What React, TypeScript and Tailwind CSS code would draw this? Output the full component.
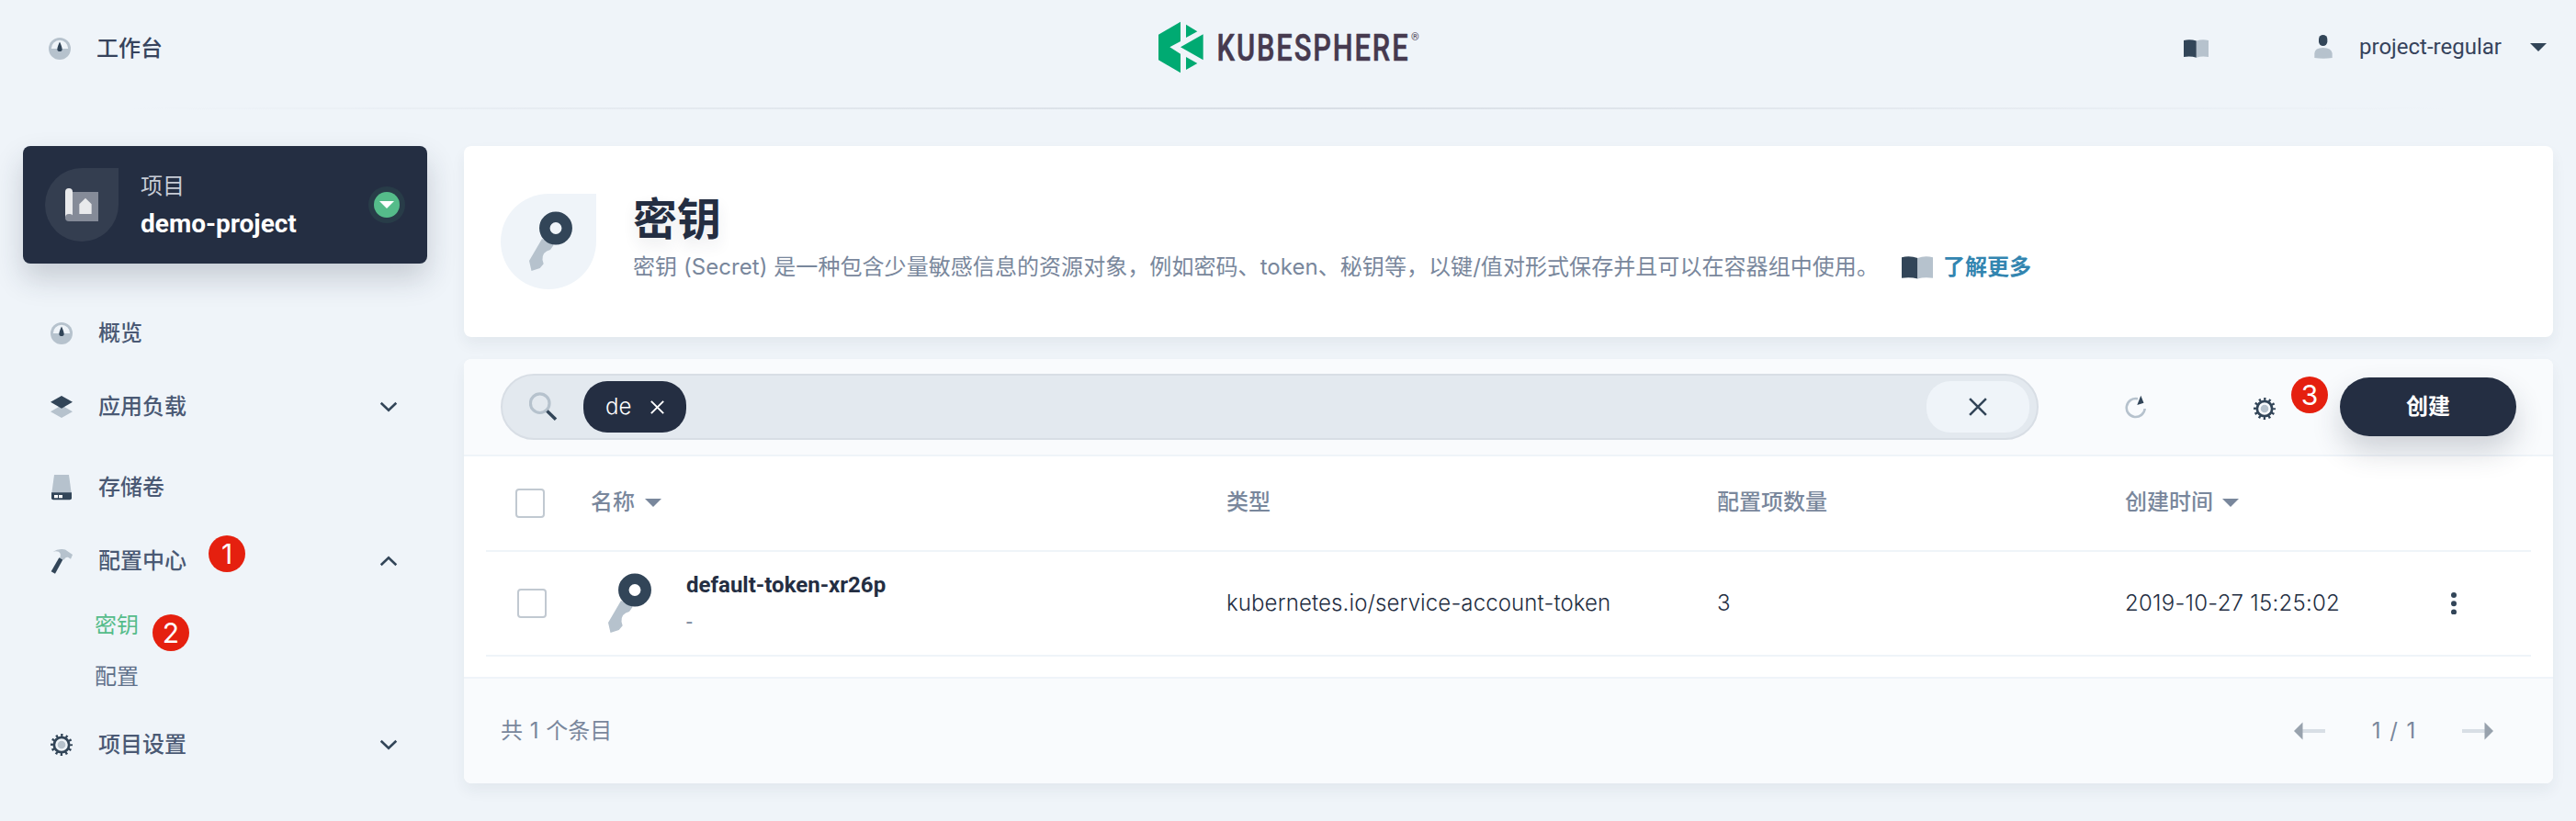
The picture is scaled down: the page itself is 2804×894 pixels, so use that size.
import React from "react";

const cjk = "font-[Inter,'Noto_Sans_CJK_SC',sans-serif]";
const roboto = "font-[Roboto,'Noto_Sans_CJK_SC',sans-serif]";

function Gauge() {
  return (
    <svg className="h-6 w-6 shrink-0" viewBox="0 0 24 24">
      <circle cx="12" cy="12" r="12" fill="#b6c2cd" />
      <path d="M2.8 12a9.2 9.2 0 0 1 18.4 0z" fill="#eff4f9" />
      <path d="M12 4.5c.9 2 2.7 6 2.7 8.2 0 1.500-1.200 2.300-2.700 2.300s-2.700-.8-2.700-2.300C9.300 10.500 11.100 6.500 12 4.500z" fill="#324558" />
    </svg>
  );
}

function Layers() {
  return (
    <svg className="h-6 w-6 shrink-0" viewBox="165 322 72 70" preserveAspectRatio="none">
      <path d="M201 352l36 20.500-36 19.500-36-19.500z" fill="#b6c2cd" />
      <path d="M201 322l36 20-36 20-36-20z" fill="#324558" />
    </svg>
  );
}

function Disk() {
  return (
    <svg className="h-7 w-6 shrink-0" viewBox="165 572 72 81" preserveAspectRatio="none">
      <path d="M177 572h48l8 57h-64z" fill="#b6c2cd" />
      <path d="M168 628h66v17q0 6-6 6h-54q-6 0-6-6z" fill="#324558" />
      <path d="M177 636h12v9h-12zM192 636h12v9h-12z" fill="#fff" />
    </svg>
  );
}

function Hammer() {
  return (
    <svg className="h-7 w-6 shrink-0" viewBox="165 804 72 81" preserveAspectRatio="none">
      <path d="M173 815q14-9 30-8l10 1 24 16-6 14-9-6q-9-1-13 9l-14-6q7-14-4-20-8-3-18 0z" fill="#b6c2cd" />
      <path d="M193 834l12 6-25 44-13-7z" fill="#324558" />
    </svg>
  );
}

function Gear() {
  return (
    <svg className="h-6 w-6 shrink-0" viewBox="0 0 24 24" fill="none">
      <circle cx="12" cy="12" r="10.500" stroke="#324558" strokeWidth="3" strokeDasharray="2.300 3.198" strokeDashoffset="1.150" />
      <circle cx="12" cy="12" r="8.200" stroke="#324558" strokeWidth="2.800" />
      <circle cx="12" cy="12" r="4.300" fill="#b6c2cd" />
    </svg>
  );
}

function Chevron({ up = false }: { up?: boolean }) {
  return (
    <svg className={up ? "h-3 w-5 rotate-180" : "h-3 w-5"} viewBox="0 0 20 12" fill="none">
      <path d="M1.700 1.700l8.300 8 8.300-8" stroke="#324558" strokeWidth="2.600" />
    </svg>
  );
}

function Book({ className }: { className: string }) {
  return (
    <svg className={className} viewBox="111 129 82 62" preserveAspectRatio="none">
      <path d="M111 132q22-5 42 2v56q-20-6-42-2z" fill="#324558" />
      <path d="M193 132q-22-5-40 2v56q18-6 40-2z" fill="#b6c2cd" />
    </svg>
  );
}

function Key() {
  return (
    <svg className="h-[66px] w-12 shrink-0" viewBox="0 0 48 66">
      <path d="M14 30L0 54l2.500 11 9.200-3 4-4.700L14.500 53Q14 44 23 42l3.700-5.300z" fill="#b6c2cd" />
      <circle cx="29" cy="18.500" r="12.200" stroke="#324558" strokeWidth="11.500" fill="none" />
    </svg>
  );
}

function Cross({ className, color, w }: { className: string; color: string; w: number }) {
  return (
    <svg className={className} viewBox="0 0 18 18">
      <path d="M1 1l16 16M17 1L1 17" stroke={color} strokeWidth={w} />
    </svg>
  );
}

function Caret({ color }: { color: string }) {
  return (
    <svg className="h-[9px] w-[18px]" viewBox="0 0 18 9">
      <path d="M0 0h18l-9 9z" fill={color} />
    </svg>
  );
}

function Badge({ n, className }: { n: string; className: string }) {
  return (
    <span className={`absolute flex h-10 w-10 items-center justify-center rounded-full bg-[#e5200f] font-[Inter,sans-serif] text-[30px] leading-none text-white ${className}`}>
      {n}
    </span>
  );
}

function NavItem({ icon, label, arrow, badge, className = "" }: { icon: React.ReactNode; label: string; arrow?: "up" | "down"; badge?: React.ReactNode; className?: string }) {
  return (
    <div className={`relative flex h-12 items-center pr-8 pl-[30px] ${className}`}>
      {icon}
      <span className="ml-7 grow text-[24px] leading-none font-medium text-[#4a5974]">{label}</span>
      {arrow && <Chevron up={arrow === "up"} />}
      {badge}
    </div>
  );
}

function Logo() {
  return (
    <svg className="h-[60px] w-[290px] shrink-0" viewBox="0 0 290 60">
      <g transform="translate(-31 -21) scale(.33333)" fill="#00aa72">
        <path d="M93 113l72-42v64l-35 19 35 22v62l-72-42zM183 80l37 23-37 20zM183 186l37 21-37 21zM239 112v84l-74-42z" />
      </g>
      <text transform="translate(63.500 44.700) scale(.742 1)" fontFamily="Roboto" fontWeight="500" fontSize="41.500" letterSpacing="2.600" fill="#463a4f" stroke="#463a4f" strokeWidth=".6" strokeLinejoin="round">KUBESPHERE</text>
      <text x="275" y="23" fontFamily="Roboto" fontSize="11" fill="#463a4f">®</text>
    </svg>
  );
}

export default function App() {
  return (
    <div className={`flex h-[894px] w-[2804px] flex-col overflow-hidden bg-[#eff4f9] ${cjk}`}>
      <header className="flex h-[117px] items-start">
        <div className="flex h-[106px] w-[1261px] items-center pl-[53px]">
          <Gauge />
          <span className="ml-[28px] text-[24px] leading-none font-medium text-[#36435c]">工作台</span>
        </div>
        <div className="pt-[21px]">
          <Logo />
        </div>
        <div className={`ml-[826px] flex h-[102px] items-center ${roboto}`}>
          <Book className="mt-1 h-5 w-[27px]" />
          <svg className="ml-[115px] h-[26px] w-5" viewBox="538 114 60 78">
            <rect x="553" y="114" width="28" height="36" rx="14" fill="#324558" />
            <path d="M539 189v-15q1-18 28-18t30 18v15q-29 4-58 0z" fill="#b6c2cd" />
          </svg>
          <span className="ml-[29px] w-[186px] text-[24px] leading-none text-[#36435c]">project-regular</span>
          <Caret color="#324558" />
        </div>
      </header>
      <div className="h-0.5 shrink-0 bg-linear-to-r from-transparent from-[5%] via-[#d8dee5] to-transparent to-[95%]" />

      <div className="flex gap-10 pt-10 pl-[25px]">
        <aside className="w-[440px]">
          <div className="flex h-32 items-center rounded-lg bg-[#242e42] pr-6 pl-6 shadow-[0_16px_32px_rgba(36,46,66,0.2)]">
            <div className="flex h-20 w-20 items-center justify-center rounded-full rounded-tr-none bg-[#343e50]">
              <svg className="h-9 w-9" viewBox="213 615 108 108">
                <path d="M225 627h96v96h-96z" fill="#858b98" />
                <path d="M213 627q0-12 12-12t12 12v82h-24z" fill="#e9eaec" />
                <rect x="213" y="699" width="26" height="24" rx="12" fill="#858b98" />
                <path d="M279 647l20 20v32h-40v-32z" fill="#e9eaec" />
              </svg>
            </div>
            <div className="ml-6 grow pt-[3px]">
              <div className="text-[24px] leading-[36px] text-[#c7ccd6]">项目</div>
              <div className={`mt-[3px] text-[28px] leading-[40px] font-bold text-white ${roboto}`}>demo-project</div>
            </div>
            <div className="flex h-10 w-10 items-center justify-center rounded-full bg-[#283c48]">
              <div className="flex h-7 w-7 items-center justify-center rounded-full bg-[#55bc8a]">
                <svg className="h-2 w-4" viewBox="0 0 16 8">
                  <path d="M0 0h16l-8 8z" fill="#fff" />
                </svg>
              </div>
            </div>
          </div>

          <nav>
            <NavItem icon={<Gauge />} label="概览" className="mt-[52px]" />
            <NavItem icon={<Layers />} label="应用负载" arrow="down" className="mt-8" />
            <NavItem icon={<Disk />} label="存储卷" className="mt-10" />
            <NavItem icon={<Hammer />} label="配置中心" arrow="up" className="mt-8" badge={<Badge n="1" className="top-[-4px] left-[202px]" />} />
            <div className="relative mt-[26px] flex h-10 items-center pl-[78px] text-[24px] leading-none text-[#55bc8a]">
              密钥
              <Badge n="2" className="top-[8px] left-[141px]" />
            </div>
            <div className="mt-4 flex h-10 items-center pl-[78px] text-[24px] leading-none text-[#5f708a]">配置</div>
            <NavItem icon={<Gear />} label="项目设置" arrow="down" className="mt-[30px]" />
          </nav>
        </aside>

        <main className="w-[2274px]">
          <section className="flex h-52 items-center rounded-lg bg-white pl-10 shadow-[0_8px_16px_rgba(36,46,66,0.06)]">
            <div className="flex h-[104px] w-[104px] items-center rounded-full rounded-tr-none bg-[#eff4f9] pl-[31px]">
              <Key />
            </div>
            <div className="ml-10">
              <h1 className="mb-2 text-[48px] leading-[48px] font-bold text-[#242e42] [text-shadow:0_8px_16px_rgba(36,46,66,0.1)]">密钥</h1>
              <div className="flex items-center">
                <p className="w-[1356px] text-[24px] leading-[40px] tracking-[0.06px] whitespace-nowrap text-[#79879c]">
                  密钥 (Secret) 是一种包含少量敏感信息的资源对象，例如密码、token、秘钥等，以键/值对形式保存并且可以在容器组中使用。
                </p>
                <Book className="ml-[25px] h-[25px] w-[34px]" />
                <a className="ml-[11px] text-[24px] leading-[40px] font-bold text-[#3385b0]">了解更多</a>
              </div>
            </div>
          </section>

          <section className="mt-6 flex h-[462px] flex-col rounded-lg bg-white shadow-[0_8px_16px_rgba(36,46,66,0.06)]">
            <div className="flex h-[106px] shrink-0 items-center rounded-t-lg border-b-2 border-[#eff4f9] bg-[#f9fbfd] pl-10">
              <div className="flex h-[72px] w-[1674px] items-center rounded-full border-2 border-[#d8dee5] bg-[#e3e9ef] pr-2 pl-[29px]">
                <svg className="h-8 w-8" viewBox="0 0 32 32" fill="none">
                  <circle cx="11.700" cy="12.200" r="10.300" stroke="#b6c2cd" strokeWidth="3.200" />
                  <path d="M19.500 20.500l9.500 9.300" stroke="#324558" strokeWidth="3.500" />
                </svg>
                <div className="ml-[27px] flex h-14 w-28 items-center rounded-[26px] bg-[#242e42] pl-6 text-[24px] leading-none text-white">
                  <span className="w-[49px] font-light">de</span>
                  <Cross className="h-[15px] w-[15px]" color="#fff" w={2.3} />
                </div>
                <div className="ml-auto flex h-14 w-28 items-center justify-center rounded-[26px] bg-[#eff4f9]">
                  <Cross className="h-5 w-5" color="#324558" w={2.3} />
                </div>
              </div>
              <svg className="ml-[94px] h-7 w-6" viewBox="0 0 24 28" fill="none">
                <path d="M14 5.300A10 10 0 1 0 21.700 16" stroke="#b6c2cd" strokeWidth="2.600" />
                <path d="M17.300 1.700l3.200 8-7.200 2.300z" fill="#324558" />
              </svg>
              <div className="mt-1 ml-[116px]">
                <Gear />
              </div>
              <div className="relative ml-[70px]">
                <button className="h-16 w-48 rounded-full bg-[#242e42] text-[24px] leading-none font-bold text-white shadow-[0_16px_32px_rgba(36,46,66,0.2)]">创建</button>
                <Badge n="3" className="top-[-1px] left-[-53px]" />
              </div>
            </div>

            <div className="mx-6 flex h-[104px] shrink-0 items-center border-b-2 border-[#eff4f9] pl-8 text-[24px] leading-none font-medium text-[#79879c]">
              <span className="h-8 w-8 rounded border-2 border-[#c1c9d1]" />
              <span className="ml-[50px] flex w-[692px] items-center gap-[11px] pb-0.5">
                名称 <Caret color="#79879c" />
              </span>
              <span className="w-[534px] pb-0.5">类型</span>
              <span className="w-[444px] pb-0.5">配置项数量</span>
              <span className="flex items-center gap-[10px] pb-0.5">
                创建时间 <Caret color="#79879c" />
              </span>
            </div>
            <div className="mx-6 flex h-[114px] shrink-0 items-center border-b-2 border-[#eff4f9] pl-[34px] text-[24px] leading-none text-[#242e42]">
              <span className="h-8 w-8 rounded border-2 border-[#c1c9d1]" />
              <span className="ml-[67px]">
                <Key />
              </span>
              <div className={`ml-[37px] w-[588px] ${roboto}`}>
                <div className="leading-[40px] font-bold">default-token-xr26p</div>
                <div className="leading-[40px] text-[#79879c]">-</div>
              </div>
              <span className="w-[534px] font-light tracking-[0.12px]">kubernetes.io/service-account-token</span>
              <span className="w-[444px] font-light">3</span>
              <span className="w-[354px] font-light tracking-[0.25px]">2019-10-27 15:25:02</span>
              <svg className="h-6 w-2" viewBox="0 0 8 24" fill="#324558">
                <circle cx="4" cy="3" r="3" />
                <circle cx="4" cy="12.300" r="3" />
                <circle cx="4" cy="21.500" r="3" />
              </svg>
            </div>

            <div className="mt-[22px] flex grow items-center justify-between rounded-b-lg border-t-2 border-[#eff4f9] bg-[#f9fbfd] pr-[65px] pl-10 text-[24px] leading-none text-[#79879c]">
              <span className="[word-spacing:1px]">共 1 个条目</span>
              <div className="flex items-center">
                <svg className="h-5 w-[34px]" viewBox="0 0 34 20">
                  <path d="M9 8h25v4H9z" fill="#d8dee5" />
                  <path d="M0 10l9.500-9.500v19z" fill="#98a2ad" />
                </svg>
                <span className="w-[149px] text-center [word-spacing:3px]">1 / 1</span>
                <svg className="h-5 w-[34px]" viewBox="0 0 34 20">
                  <path d="M0 8h25v4H0z" fill="#d8dee5" />
                  <path d="M34 10L24.500.5v19z" fill="#98a2ad" />
                </svg>
              </div>
            </div>
          </section>
        </main>
      </div>
    </div>
  );
}
